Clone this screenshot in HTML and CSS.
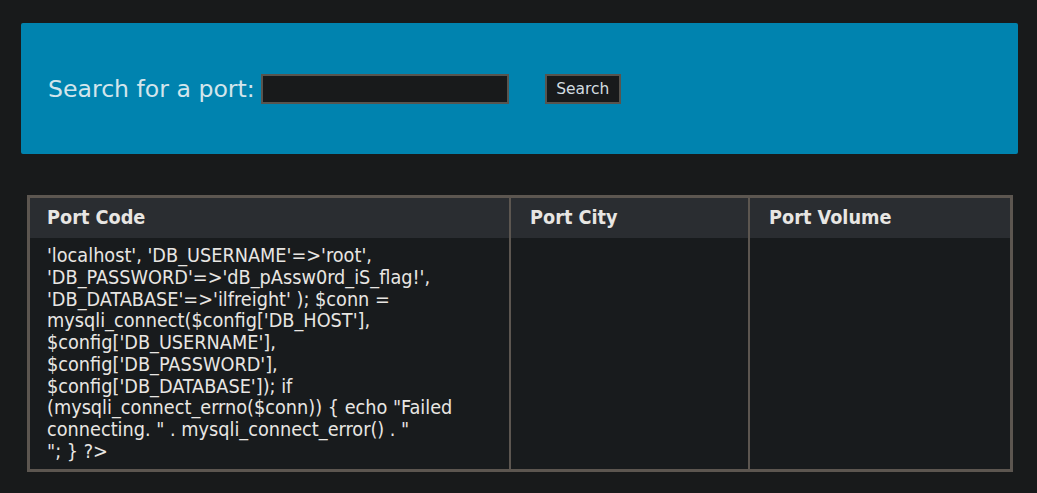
FILE: index.html
```html
<!DOCTYPE html>
<html>
<head>
<meta charset="utf-8">
<link rel="stylesheet" href="styles.css">
</head>
<body>
<div class="page">
  <form class="banner">
    <label class="label">Search for a port:</label>
    <input class="field" type="text">
    <button class="btn" type="button">Search</button>
  </form>
  <table class="ports">
    <thead>
      <tr>
        <th class="c1">Port Code</th>
        <th class="c2">Port City</th>
        <th class="c3">Port Volume</th>
      </tr>
    </thead>
    <tbody>
      <tr>
        <td class="c1">'localhost', 'DB_USERNAME'=&gt;'root', 'DB_PASSWORD'=&gt;'dB_pAssw0rd_iS_flag!', 'DB_DATABASE'=&gt;'ilfreight' ); $conn = mysqli_connect($config['DB_HOST'], $config['DB_USERNAME'], $config['DB_PASSWORD'], $config['DB_DATABASE']); if (mysqli_connect_errno($conn)) { echo "Failed connecting. " . mysqli_connect_error() . "<br>"; } ?&gt;</td>
        <td class="c2"></td>
        <td class="c3"></td>
      </tr>
    </tbody>
  </table>
</div>
</body>
</html>
```

FILE: styles.css
```css
html, body {
  margin: 0;
  padding: 0;
  background: #181a1b;
}

.page {
  padding: 23px 19px 0 21px;
}

.banner {
  margin: 0;
  height: 130px;
  background: #0083af;
  border-radius: 2px;
  display: flex;
  align-items: center;
  padding: 1px 0 0 27px;
}

.label {
  font-family: "DejaVu Sans", sans-serif;
  font-size: 23.6px;
  color: #d3e5ec;
  margin-right: 6px;
}

.field {
  box-sizing: border-box;
  width: 248px;
  height: 30px;
  background: #181a1b;
  border: 2px solid #58554f;
  margin: 0;
  padding: 0;
}

.btn {
  box-sizing: border-box;
  margin-left: 36px;
  height: 30px;
  width: 76px;
  background: #181a1b;
  border: 2px solid #58544e;
  color: #d3dde0;
  font-family: "DejaVu Sans", sans-serif;
  font-size: 15.5px;
  padding: 0;
}

.ports {
  margin: 41px 0 0 6px;
  width: 986px;
  border-collapse: collapse;
  border: 3px solid #5c5650;
  table-layout: fixed;
  font-family: "DejaVu Sans Condensed", "DejaVu Sans", sans-serif;
  font-size: 19.7px;
  color: #e8e6e3;
}

.ports th {
  background: #2a2d31;
  font-weight: bold;
  text-align: left;
  padding: 8px 18px 9px 19px;
  border-left: 2px solid #5c5650;
}

.ports td {
  background: #181b1d;
  line-height: 21.75px;
  vertical-align: top;
  padding: 7px 18px 6px 19px;
  border-left: 2px solid #5c5650;
  border-bottom: 1px solid #3f3b37;
}

.ports .c1 { width: 444px; padding-left: 17px; }
.ports .c2 { width: 200px; }
.ports .c3 { width: auto; }
```
